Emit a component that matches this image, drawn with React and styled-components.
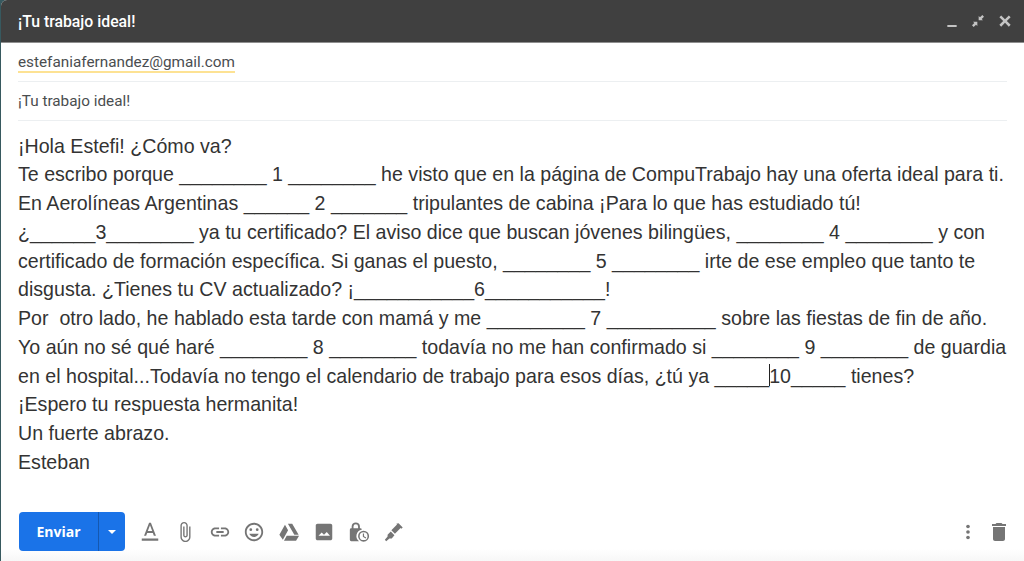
import React from 'react';
import styled, { createGlobalStyle } from 'styled-components';

const GlobalStyle = createGlobalStyle`
  html, body {
    margin: 0;
    padding: 0;
    background: #37595f;
  }
`;

const Compose = styled.div`
  width: 1023px;
  height: 561px;
  margin-left: 1px;
  display: flex;
  flex-direction: column;
  background: #ffffff;
  border-top-left-radius: 6px;
  overflow: hidden;
`;

const Header = styled.header`
  height: 42px;
  flex: none;
  display: flex;
  align-items: center;
  justify-content: space-between;
  padding: 0 10px 0 17px;
  background: #404040;
  border-bottom: 1px solid #8f8f8f;
  color: #ffffff;
  font: 500 15.8px Roboto, sans-serif;
`;

const WindowButtons = styled.div`
  display: flex;
  align-items: center;
  gap: 10px;
  color: #c4c4c4;
`;

const Fields = styled.div`
  flex: none;
  margin: 0 17px;
`;

const Field = styled.div`
  height: ${(p) => p.$h}px;
  box-sizing: border-box;
  display: flex;
  align-items: center;
  border-bottom: 1px solid #eceff1;
  color: #4a4d50;
  font: 15.3px Roboto, sans-serif;
`;

const Recipient = styled.span`
  padding-top: 2px;
  border-bottom: 2px solid #fde293;
  line-height: 17px;
`;

const Message = styled.div`
  flex: 1;
  padding: 10.5px 17px 0;
  color: #333333;
  font: 19.63px/28.75px "Liberation Sans", Arial, sans-serif;
`;

const Line = styled.div`
  white-space: pre;
`;

const Caret = styled.span`
  display: inline-block;
  width: 1px;
  height: 22px;
  margin-right: -1px;
  vertical-align: -3px;
  background: #222222;
`;

const Toolbar = styled.footer`
  flex: none;
  height: 49px;
  padding: 0 13px 0 18px;
  display: flex;
  align-items: flex-start;
  background: linear-gradient(to bottom, #ffffff 75%, #f7f7f7 100%);
`;

const SendGroup = styled.div`
  width: 106px;
  height: 39px;
  display: flex;
  border-radius: 4px;
  background: #1a73e8;
  color: #ffffff;
`;

const SendLabel = styled.div`
  width: 79px;
  display: flex;
  align-items: center;
  justify-content: center;
  border-right: 1px solid #1558b0;
  font: 700 14px "Open Sans", Roboto, sans-serif;
`;

const SendMore = styled.div`
  flex: 1;
  display: flex;
  align-items: center;
  justify-content: center;
`;

const Arrow = styled.span`
  width: 0;
  height: 0;
  border-left: 4px solid transparent;
  border-right: 4px solid transparent;
  border-top: 4px solid #ffffff;
`;

const Tools = styled.div`
  display: flex;
  align-items: center;
  height: 39px;
  margin-left: 14px;
  gap: 12.8px;
  color: #757575;
`;

const EndTools = styled(Tools)`
  margin-left: auto;
  gap: 8px;
`;

const Icon = ({ size = 22, children }) => (
  <svg width={size} height={size} viewBox="0 0 24 24" fill="currentColor">
    {children}
  </svg>
);

const lines = [
  '¡Hola Estefi! ¿Cómo va?',
  'Te escribo porque ________ 1 ________ he visto que en la página de CompuTrabajo hay una oferta ideal para ti.',
  'En Aerolíneas Argentinas ______ 2 _______ tripulantes de cabina ¡Para lo que has estudiado tú!',
  '¿______3________ ya tu certificado? El aviso dice que buscan jóvenes bilingües, ________ 4 ________ y con',
  'certificado de formación específica. Si ganas el puesto, ________ 5 ________ irte de ese empleo que tanto te',
  'disgusta. ¿Tienes tu CV actualizado? ¡___________6___________!',
  'Por  otro lado, he hablado esta tarde con mamá y me _________ 7 __________ sobre las fiestas de fin de año.',
  'Yo aún no sé qué haré ________ 8 ________ todavía no me han confirmado si ________ 9 ________ de guardia',
  'en el hospital...Todavía no tengo el calendario de trabajo para esos días, ¿tú ya _____',
];

const closing = ['¡Espero tu respuesta hermanita!', 'Un fuerte abrazo.', 'Esteban'];

export default function App() {
  return (
    <>
      <GlobalStyle />
      <Compose>
        <Header>
          ¡Tu trabajo ideal!
          <WindowButtons>
            <Icon size={16}>
              <path d="M5 18h14v3H5z" />
            </Icon>
            <Icon size={16}>
              <path d="M21 5.500 18.500 3 15 6.500 13 4.500V11h6.500l-2-2zM3 18.500 5.500 21 9 17.500l2 2V13H4.500l2 2z" />
            </Icon>
            <Icon size={18}>
              <path d="M19.500 6.900 17.100 4.500 12 9.600 6.900 4.500 4.500 6.900 9.600 12l-5.100 5.100 2.400 2.400 5.100-5.100 5.100 5.100 2.400-2.400-5.100-5.100z" />
            </Icon>
          </WindowButtons>
        </Header>
        <Fields>
          <Field $h={39}>
            <Recipient>estefaniafernandez@gmail.com</Recipient>
          </Field>
          <Field $h={39}>¡Tu trabajo ideal!</Field>
        </Fields>
        <Message>
          {lines.map((l, i) => (
            <Line key={i}>
              {l}
              {i === lines.length - 1 && (
                <>
                  <Caret />
                  10_____ tienes?
                </>
              )}
            </Line>
          ))}
          {closing.map((l) => (
            <Line key={l}>{l}</Line>
          ))}
        </Message>
        <Toolbar>
          <SendGroup>
            <SendLabel>Enviar</SendLabel>
            <SendMore>
              <Arrow />
            </SendMore>
          </SendGroup>
          <Tools>
            <Icon>
              <path d="M11 2 5.500 16h2.300l1.100-3h6.200l1.100 3h2.300L13 2zm-1.400 9L12 4.700 14.400 11zM3 19h18v2.500H3z" />
            </Icon>
            <Icon>
              <path d="M16.500 6v11.500c0 2.210-1.790 4-4 4s-4-1.790-4-4V5c0-1.380 1.120-2.500 2.500-2.500s2.500 1.120 2.500 2.500v10.500c0 .55-.45 1-1 1s-1-.45-1-1V6H10v9.500c0 1.380 1.120 2.500 2.500 2.500s2.500-1.120 2.500-2.500V5c0-2.210-1.790-4-4-4S7 2.790 7 5v12.500c0 3.040 2.460 5.500 5.500 5.500s5.500-2.460 5.500-5.500V6h-1.500z" />
            </Icon>
            <Icon>
              <path d="M3.900 12c0-1.710 1.390-3.100 3.100-3.100h4V7H7c-2.760 0-5 2.240-5 5s2.240 5 5 5h4v-1.900H7c-1.710 0-3.100-1.390-3.100-3.100zM8 13h8v-2H8v2zm9-6h-4v1.900h4c1.710 0 3.100 1.390 3.100 3.100s-1.390 3.100-3.100 3.100h-4V17h4c2.760 0 5-2.240 5-5s-2.240-5-5-5z" />
            </Icon>
            <Icon>
              <path d="M11.990 2C6.470 2 2 6.480 2 12s4.470 10 9.990 10C17.520 22 22 17.520 22 12S17.520 2 11.990 2zM12 20c-4.420 0-8-3.580-8-8s3.580-8 8-8 8 3.580 8 8-3.580 8-8 8z" />
              <circle cx="15.500" cy="9.500" r="1.500" />
              <circle cx="8.500" cy="9.500" r="1.500" />
              <path d="M12 17.500c2.330 0 4.310-1.460 5.110-3.500H6.890c.8 2.040 2.780 3.500 5.110 3.500z" />
            </Icon>
            <Icon>
              <path d="M8.500 3h7l7 12h-4.700l-7-12zM7.600 4.200l3.400 5.800L5.300 20.500 1.500 15zM9.500 16H23l-3.300 5.500H6.500z" />
            </Icon>
            <Icon>
              <path d="M21 19V5c0-1.100-.9-2-2-2H5c-1.100 0-2 .9-2 2v14c0 1.100.9 2 2 2h14c1.100 0 2-.9 2-2zM6 16l3.500-3.500 2.500 2.500 3-3 3.500 4z" />
            </Icon>
            <Icon>
              <path fillRule="evenodd" d="M8.500 1.500a4.500 4.500 0 0 0-4.500 4.500v2H3.500A1.500 1.500 0 0 0 2 9.500v11A1.500 1.500 0 0 0 3.500 22H12a7 7 0 0 1 3-12.500V9.500A1.500 1.500 0 0 0 13.500 8H13V6a4.500 4.500 0 0 0-4.500-4.500zm0 2A2.500 2.500 0 0 1 11 6v2H6V6a2.500 2.500 0 0 1 2.500-2.500z" />
              <path d="M17 10.500a6 6 0 1 0 0 12 6 6 0 0 0 0-12zm0 10.300a4.300 4.300 0 1 1 0-8.600 4.300 4.300 0 0 1 0 8.600zM17.500 13.500h-1.300v3.800l3 1.800.7-1.100-2.400-1.400z" />
            </Icon>
            <Icon>
              <path d="M17 2.500 21.500 7l-1.500 1.500-.8-.8-6.200 6.200-3.900-3.900 6.200-6.200-.8-.8zM8.500 11.500l4 4-3 3.500H7l-3.500 3-1.500-1.500 3-3.500V15z" />
            </Icon>
          </Tools>
          <EndTools>
            <Icon>
              <circle cx="12" cy="6" r="2" />
              <circle cx="12" cy="12" r="2" />
              <circle cx="12" cy="18" r="2" />
            </Icon>
            <Icon size={24}>
              <path d="M6 19c0 1.100.9 2 2 2h8c1.100 0 2-.9 2-2V7H6zM19 4h-3.500l-1-1h-5l-1 1H5v2h14z" />
            </Icon>
          </EndTools>
        </Toolbar>
      </Compose>
    </>
  );
}
